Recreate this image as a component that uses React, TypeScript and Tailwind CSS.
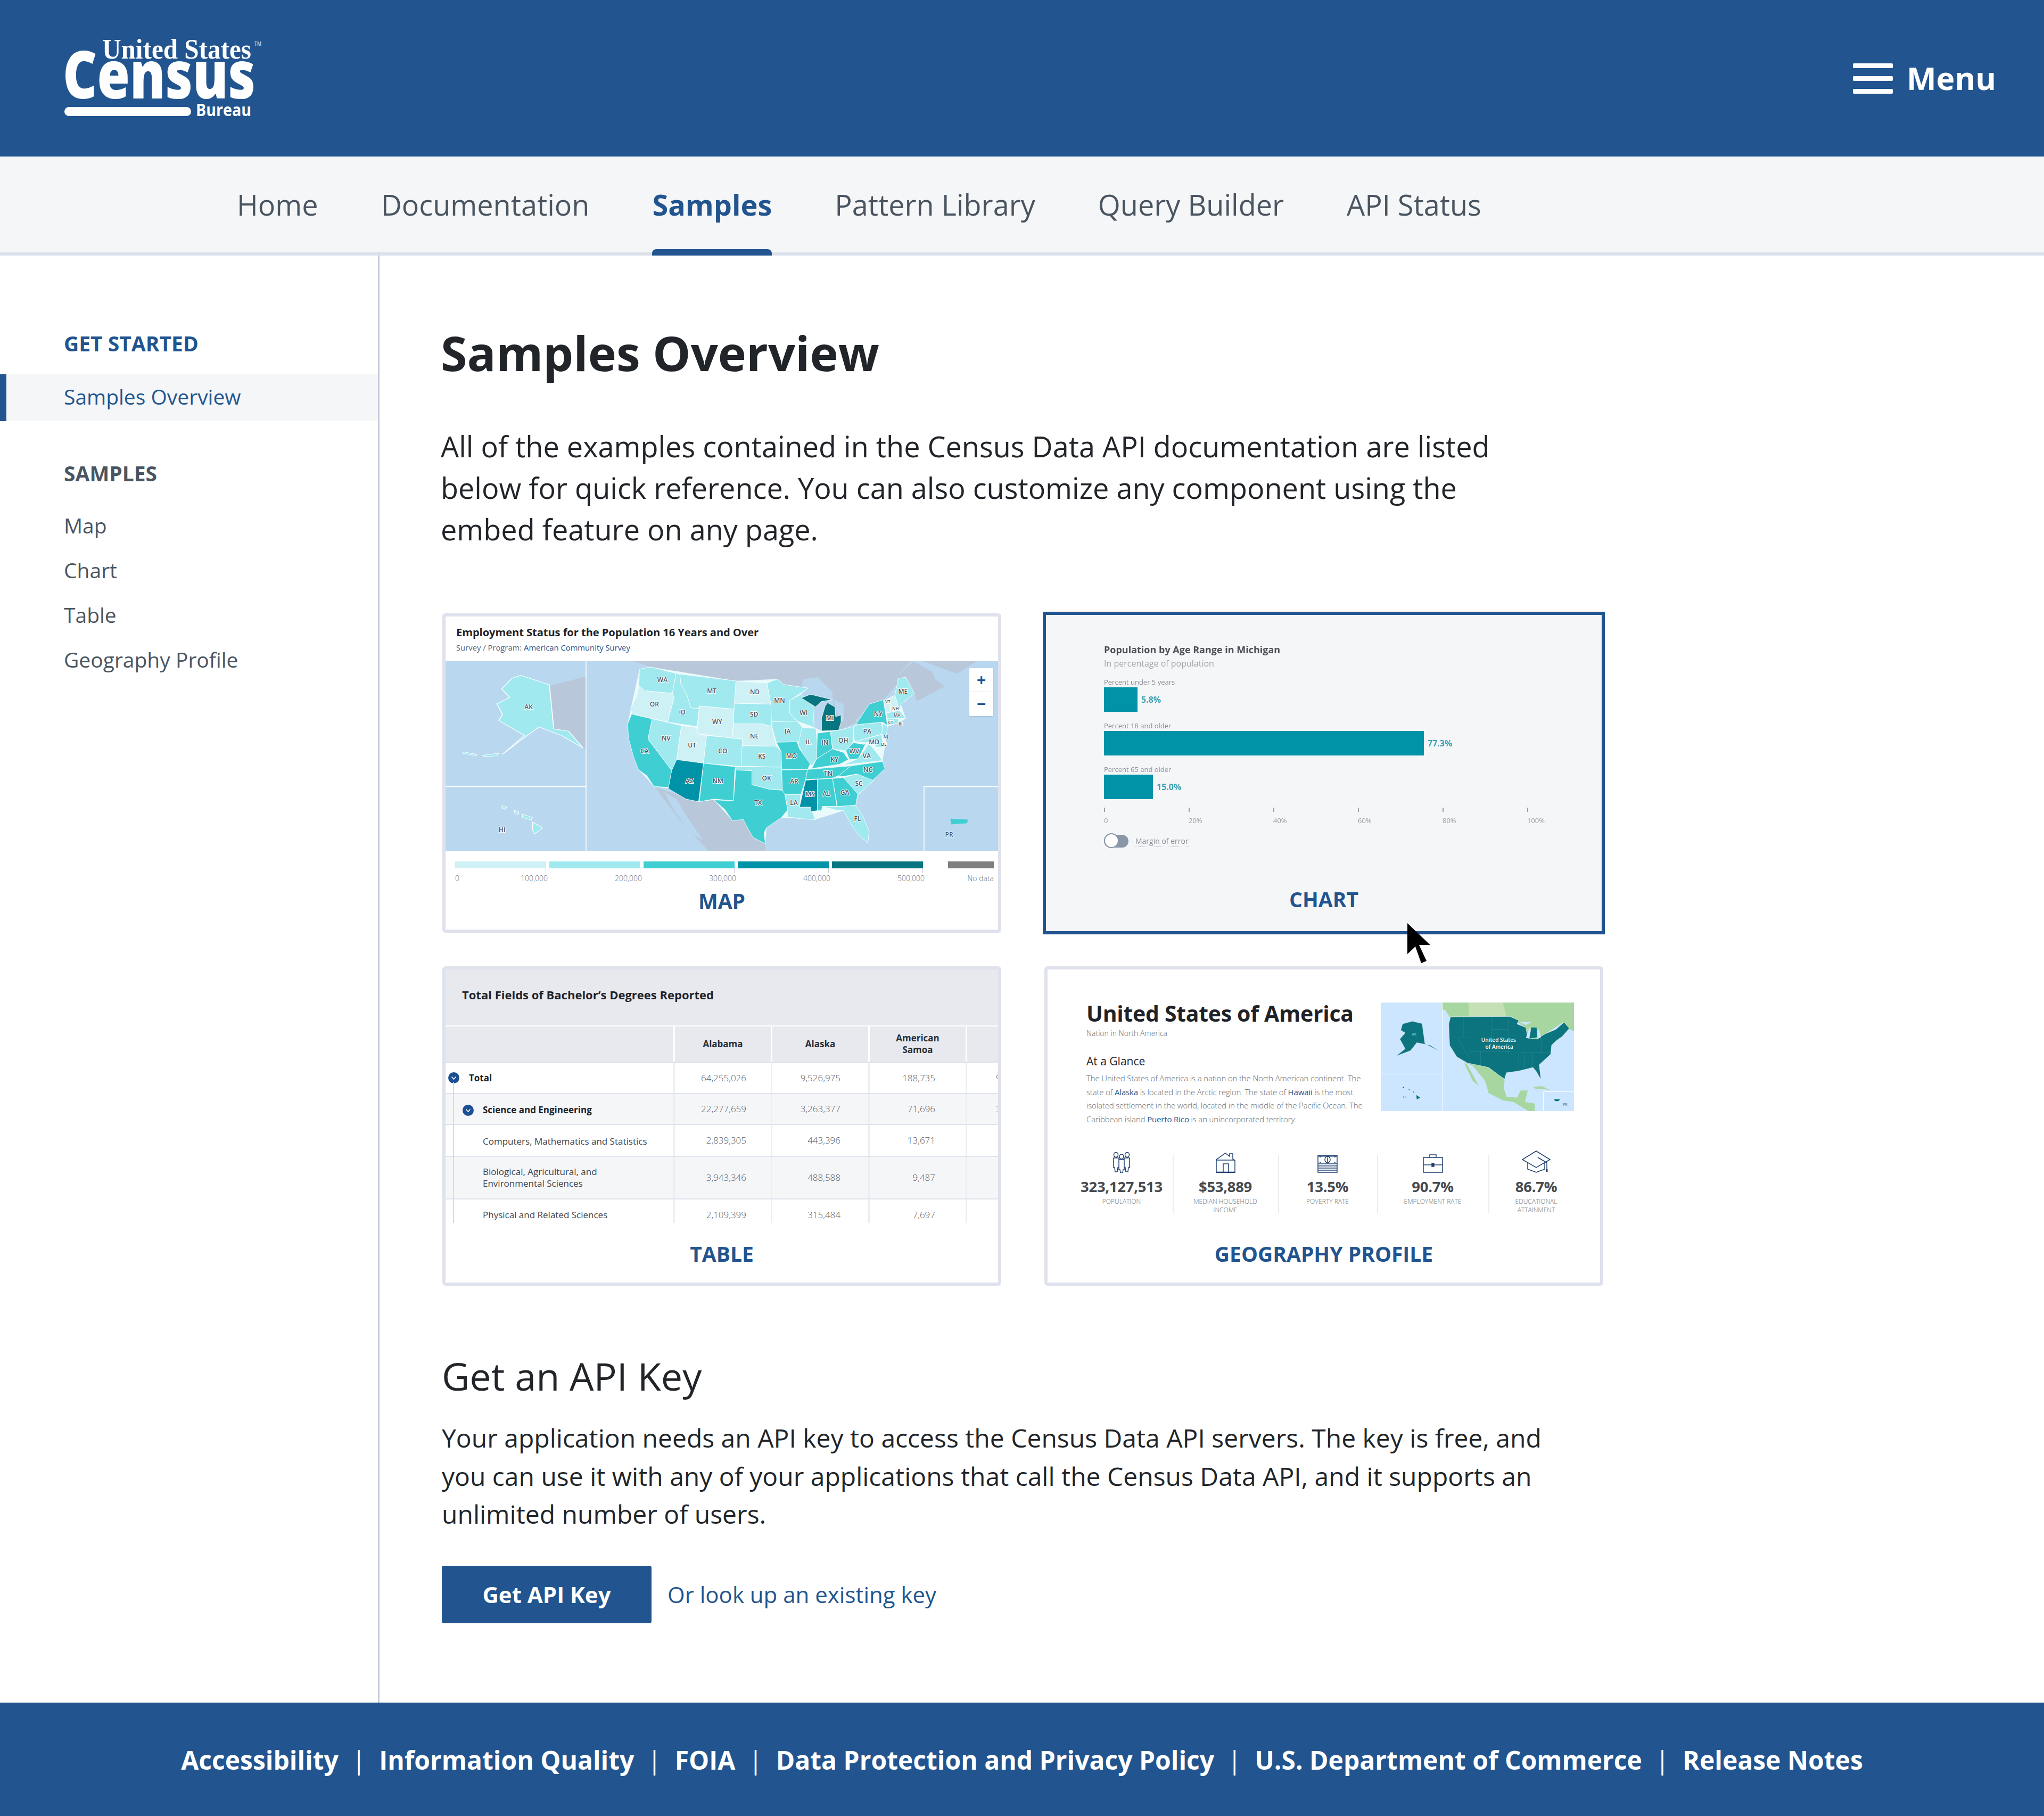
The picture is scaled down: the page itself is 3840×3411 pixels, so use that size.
import React from "react";

const C1 = "#cef1f5", C2 = "#9fe9ef", C3 = "#3fcfd2", C4 = "#0093a8", C5 = "#087680";
const STATES: [string, string][] = [
  [C2, "90,45 135,32 240,68 225,180 110,165 88,135"],
  [C1, "88,135 110,165 225,180 232,205 205,340 58,295 55,262 80,190"],
  [C3, "58,295 142,322 125,435 222,610 210,705 150,700 120,640 85,605 65,530 45,430 42,350"],
  [C2, "142,322 262,360 242,550 222,610 125,435"],
  [C2, "240,68 255,72 260,130 285,190 300,260 335,265 325,365 205,340 232,205 225,180"],
  [C2, "255,72 485,110 478,268 335,250 330,265 300,260 285,190 260,130"],
  [C1, "335,250 478,268 470,430 325,405"],
  [C1, "262,360 325,370 325,405 365,415 352,570 242,550"],
  [C2, "365,415 512,435 508,588 352,570"],
  [C4, "242,550 352,570 332,785 280,770 208,712 222,610"],
  [C3, "352,570 485,590 480,610 475,780 395,770 335,785"],
  [C1, "485,110 612,122 628,240 478,235"],
  [C2, "478,235 628,240 630,340 632,365 590,350 475,350"],
  [C1, "475,350 590,350 632,365 650,475 510,472 512,435 470,430"],
  [C2, "510,472 650,475 670,505 672,592 506,586"],
  [C2, "484,588 672,592 675,720 620,715 550,690 550,612 484,608"],
  [C3, "484,608 550,612 550,690 620,715 682,722 697,830 670,875 610,930 600,960 605,1020 555,985 530,925 515,885 470,890 440,830 395,775 475,780"],
  [C2, "612,122 655,100 680,130 780,150 705,220 705,290 735,335 630,338 628,240"],
  [C2, "630,338 735,335 760,375 750,450 650,453 632,365"],
  [C3, "650,453 735,450 745,490 790,570 778,605 672,605 670,505"],
  [C3, "672,608 778,605 770,660 750,745 685,745 675,720"],
  [C2, "685,745 750,745 745,815 790,815 810,885 750,880 695,870 697,830"],
  [C2, "705,220 750,185 800,250 805,370 735,335 705,290"],
  [C2, "755,372 812,375 820,490 815,545 795,585 760,520 740,465"],
  [C3, "818,402 872,392 880,490 815,545"],
  [C5, "752,205 790,185 880,215 835,225 810,255"],
  [C5, "850,250 860,232 890,255 893,310 915,300 915,340 905,385 835,390 835,320"],
  [C2, "872,392 910,385 965,365 965,450 935,500 880,490"],
  [C3, "815,545 880,490 925,510 945,550 910,575 795,600"],
  [C3, "778,605 955,585 905,640 875,655 770,660"],
  [C4, "770,665 818,660 818,835 790,840 790,815 745,815"],
  [C3, "818,660 880,655 898,810 838,812 835,835 818,835"],
  [C3, "880,655 925,650 985,730 975,805 900,812"],
  [C2, "838,812 900,812 975,805 1005,870 1030,950 1025,1015 990,975 965,930 925,835 890,830"],
  [C2, "925,650 980,630 1050,665 985,745"],
  [C3, "905,640 955,585 1085,560 1095,600 1045,665 980,630 920,645"],
  [C2, "920,580 985,545 1030,460 1060,510 1085,555"],
  [C3, "935,500 965,455 1010,465 1020,450 985,545 950,550"],
  [C2, "965,365 985,355 1080,340 1088,405 970,450"],
  [C3, "975,355 1030,240 1088,215 1105,360 1085,340"],
  [C2, "970,450 1080,410 1090,480 1060,480 1040,450 1015,455"],
  [C2, "1085,345 1105,365 1100,430 1082,410"],
  [C1, "1090,220 1115,212 1118,285 1100,290"],
  [C1, "1115,210 1135,190 1155,275 1118,285"],
  [C2, "1135,190 1150,95 1180,90 1215,180 1160,240 1155,275"],
  [C2, "1100,290 1155,275 1180,320 1105,322"],
  [C2, "1105,322 1150,320 1150,345 1108,360"],
  [C3, "1362,880 1435,885 1430,905 1365,912"],
];
const LABELS: [string, number, number, number?][] = [
  ["WA",184,103],["OR",151,240],["CA",111,502],["NV",199,431],["ID",265,284],["MT",386,165],["WY",408,339],["UT",305,468],["CO",431,502],["AZ",295,667],["NM",411,668],["ND",562,170],["SD",559,295],["NE",560,417],["KS",591,530],["OK",610,653],["TX",575,790],["MN",663,220],["IA",696,391],["MO",712,527],["AR",723,672],["LA",722,790],["WI",762,287],["IL",781,450],["IN",849,453],["MI",869,318],["OH",924,442],["KY",888,549],["TN",862,627],["MS",788,742],["AL",855,738],["GA",930,734],["FL",982,878],["SC",988,683],["NC",1025,605],["VA",1020,527],["WV",969,502],["PA",1022,391],["NY",1067,294],["ME",1168,169],["MD",1050,450],["PR",1357,968],
  ["VT",1106,225,8],["NH",1138,262,8],["MA",1144,298,8],["CT",1118,340,8],["RI",1158,350,8],["NJ",1098,422,8],["DE",1090,464,8],
];

function MapSvg() {
  const label = (t: string, x: number, y: number, s = 12) => (
    <text key={t} x={x} y={y} textAnchor="middle" dominantBaseline="central" fontSize={s} fontWeight={600} fill="#46505c" stroke="#ffffff" strokeWidth={2} paintOrder="stroke">{t}</text>
  );
  return (
    <svg viewBox="0 0 1038 356" className="block w-[1038px] h-[356px]">
      <rect width="1038" height="356" fill="#b9d8f0" />
      <g transform="translate(323,0) scale(0.4591,0.3361)">
        <polygon fill="#b8c8da" points="60,0 1200,0 1140,90 1150,120 1090,215 1030,240 975,355 905,390 880,215 780,150 680,130 655,100 485,110 240,68 135,32" />
        <polygon fill="#b8c8da" points="1210,0 1140,90 1215,180 1225,225 1340,140 1300,100 1290,60" />
        <polygon fill="#b8c8da" points="1250,0 1390,70 1470,0" />
        <polygon fill="#b9d8f0" points="760,100 820,90 880,170 880,215 790,185 750,185" />
        <polygon fill="#b9d8f0" points="885,215 925,240 925,330 915,340 890,255" />
        <polygon fill="#b9d8f0" points="905,385 985,340 980,355 965,365" />
        <polygon fill="#b9d8f0" points="975,330 1030,260 1030,285 985,345" />
        <polygon fill="#b8c8da" points="155,705 330,785 395,775 470,890 515,885 555,985 605,1020 605,1071 380,1071 250,880 200,790" />
        <polygon fill="#b9d8f0" points="190,730 240,770 290,880 350,1000 300,960 230,830" />
        <polygon fill="#eafafb" points="90,45 135,32 485,110 655,100 680,130 780,150 750,185 800,250 805,370 835,390 905,385 965,365 975,355 1030,240 1090,220 1135,190 1150,95 1180,90 1215,180 1160,240 1180,320 1150,345 1105,365 1100,430 1085,555 1095,600 1045,665 985,745 975,805 1030,950 1025,1015 965,930 925,835 810,885 750,880 670,875 610,930 605,1020 555,985 515,885 470,890 395,775 332,785 208,712 150,700 85,605 42,350 55,262" />
        {STATES.map(([f, p], i) => (
          <polygon key={i} fill={f} points={p} stroke="#ffffff" strokeWidth={i < 47 ? 2 : 0} strokeLinejoin="round" />
        ))}
      </g>
      <g transform="translate(-17,-102) scale(0.6887,0.3954)">
        <polygon fill="#b8c8da" points="308,375 409,330 409,680 400,670 360,590 320,580" />
        <polygon fill={C2} stroke="#fff" strokeWidth={2.5} strokeLinejoin="round" points="230,325 308,370 320,580 360,590 400,670 340,610 280,570 240,620 180,700 240,610 170,540 180,510 165,460 200,430 178,390 205,340" />
        <polygon fill={C2} stroke="#fff" strokeWidth={2} points="125,705 170,695 165,708 130,710" />
        <polygon fill={C2} stroke="#fff" strokeWidth={2} points="72,688 110,700 108,706 72,696" />
        <polygon fill={C2} stroke="#fff" strokeWidth={2} points="262,1022 290,1050 268,1078 262,1060" />
        <polygon fill={C2} stroke="#fff" strokeWidth={2} points="235,985 262,1000 258,1012 235,1000" />
        <polygon fill={C2} stroke="#fff" strokeWidth={2} points="213,966 225,975 222,985 213,978" />
        <polygon fill={C2} stroke="#fff" strokeWidth={2} points="180,945 192,950 186,962 178,955" />
      </g>
      <path d="M264 0V356M0 235.5H264M1038 235.5H899V356" fill="none" stroke="#ffffff" strokeWidth={1.5} />
      {LABELS.map(([t, x, y, s]) => label(t, 323 + x / 2.178, y / 2.975, s ?? 12))}
      {label("AK", 156, 85)}
      {label("HI", 106, 316)}
    </svg>
  );
}

const LEG: [string, string][] = [[C1, "100,000"], [C2, "200,000"], [C3, "300,000"], [C4, "400,000"], [C5, "500,000"]];

function MapPreview() {
  return (
    <div className="flex flex-col h-full">
      <div className="h-[84px] shrink-0 pl-[20px] pt-[16px]">
        <div className="text-[20.2px] leading-[26px] font-bold text-[#1f2328] tracking-[-0.1px]">Employment Status for the Population 16 Years and Over</div>
        <div className="text-[14.8px] leading-[22px] mt-[5px] text-[#5a6572]">Survey / Program: <span className="text-[#22558f]">American Community Survey</span></div>
      </div>
      <div className="relative h-[356px] shrink-0">
        <MapSvg />
        <div className="absolute left-[984px] top-[13px] w-[45px] h-[90px] bg-white rounded-[2px] shadow flex flex-col items-center text-[#22558f] font-bold">
          <div className="h-[44px] w-full flex items-center justify-center text-[30px] leading-none">+</div>
          <div className="h-px w-[37px] bg-[#dfe2ea]" />
          <div className="h-[44px] w-full flex items-center justify-center text-[30px] leading-none">−</div>
        </div>
      </div>
      <div className="flex pl-[18px] pt-[20px] text-[14px] font-light text-[#6a7480]">
        <div className="flex gap-[6px]">
          {LEG.map(([c, t], i) => (
            <div key={t} className="w-[171px]">
              <div className="h-[13px]" style={{ background: c }} />
              <div className="h-[9px] w-px bg-[#c8ccd2] ml-auto" />
              <div className="flex justify-between leading-[18px] mt-[1px] -mr-[3px]">
                <span>{i === 0 ? "0" : ""}</span>
                <span>{t}</span>
              </div>
            </div>
          ))}
        </div>
        <div className="ml-[47px] w-[86px] text-right">
          <div className="h-[13px] bg-[#7f7f7f]" />
          <div className="leading-[18px] mt-[10px]">No data</div>
        </div>
      </div>
    </div>
  );
}

function Bar({ label, w, value }: { label: string; w: string; value: string }) {
  return (
    <div>
      <div className="text-[13px] leading-[20px] text-[#8a8f96]">{label}</div>
      <div className="flex items-center h-[46px] mb-[16px]">
        <div className={`h-[46px] bg-[#0093a8] ${w}`} />
        <div className="ml-[7px] text-[16px] font-bold text-[#3aa0b0]">{value}</div>
      </div>
    </div>
  );
}

function ChartPreview() {
  const ticks = ["0", "20%", "40%", "60%", "80%", "100%"];
  return (
    <div className="pl-[109px] pt-[52px] blur-[0.6px]">
      <div className="text-[18px] leading-[26px] font-bold text-[#4b4f55]">Population by Age Range in Michigan</div>
      <div className="text-[16px] leading-[22px] mt-[2px] mb-[14px] text-[#a0a5ab]">In percentage of population</div>
      <Bar label="Percent under 5 years" w="w-[63px]" value="5.8%" />
      <Bar label="Percent 18 and older" w="w-[601px]" value="77.3%" />
      <Bar label="Percent 65 and older" w="w-[92px]" value="15.0%" />
      <div className="flex mt-[4px] w-[960px]">
        {ticks.map((t) => (
          <div key={t} className="w-[159px] text-[13px] text-[#9aa0a6]">
            <div className="w-[2px] h-[8px] bg-[#9aa0a6]" />
            <div className="leading-[18px] mt-[7px]">{t}</div>
          </div>
        ))}
      </div>
      <div className="flex items-center mt-[18px] gap-[13px]">
        <div className="relative w-[46px] h-[24px] bg-[#8a97a8] rounded-full">
          <div className="absolute left-0 top-[-3px] w-[28px] h-[28px] rounded-full bg-white border-2 border-[#8a97a8]" />
        </div>
        <div className="text-[14px] text-[#8a8f96] border-b border-dotted border-[#b9bdc2]">Margin of error</div>
      </div>
    </div>
  );
}

const Chevron = () => (
  <svg viewBox="0 0 21 21" className="w-[21px] h-[21px] shrink-0">
    <circle cx="10.5" cy="10.5" r="10.5" fill="#1c4f93" />
    <path d="M6.5 8.5l4 4.5 4-4.5" fill="none" stroke="#fff" strokeWidth="1.6" />
  </svg>
);

const PR = ["pr-[46px]", "pr-[52px]", "pr-[57px]"];
const ROWS: { h: string; bg: string; first: React.ReactNode; vals: string[]; last?: string }[] = [
  { h: "h-[59px]", bg: "bg-white", first: <div className="flex items-center pl-[5px] gap-[18px] font-bold text-[#1f2328]"><Chevron /><span>Total</span></div>, vals: ["64,255,026", "9,526,975", "188,735"], last: "9" },
  { h: "h-[58px]", bg: "bg-[#f5f6f8]", first: <div className="flex items-center pl-[32px] gap-[17px] font-bold text-[#1f2328] pt-[4px]"><Chevron /><span>Science and Engineering</span></div>, vals: ["22,277,659", "3,263,377", "71,696"], last: "3" },
  { h: "h-[60px]", bg: "bg-white", first: <div className="pl-[70px] pt-[4px]">Computers, Mathematics and Statistics</div>, vals: ["2,839,305", "443,396", "13,671"] },
  { h: "h-[80px]", bg: "bg-[#f5f6f8]", first: <div className="pl-[70px] leading-[22px]">Biological, Agricultural, and<br />Environmental Sciences</div>, vals: ["3,943,346", "488,588", "9,487"] },
  { h: "h-[60px]", bg: "bg-white", first: <div className="pl-[70px]">Physical and Related Sciences</div>, vals: ["2,109,399", "315,484", "7,697"] },
];

function TablePreview() {
  const heads: React.ReactNode[] = ["Alabama", "Alaska", <>American<br />Samoa</>, ""];
  return (
    <div className="relative h-[476px] overflow-hidden">
      <div className="h-[107px] bg-[#e7e9ef] pl-[31px] pt-[34px] border-b-[2px] border-white">
        <div className="text-[22px] leading-[26px] font-bold text-[#1f2328]">Total Fields of Bachelor’s Degrees Reported</div>
      </div>
      <div className="flex h-[68px] bg-[#e7e9ef] border-b-[2px] border-[#dbe0ea]">
        <div className="w-[428px] shrink-0" />
        {heads.map((t, i) => (
          <div key={i} className="w-[183px] shrink-0 border-l-[3px] border-white flex items-center justify-center text-center text-[17px] leading-[22px] font-bold text-[#2b2f34]">{t}</div>
        ))}
      </div>
      {ROWS.map((r, i) => (
        <div key={i} className={`flex ${r.h} ${r.bg} border-b-[2px] border-[#dfe3ec] text-[17px] text-[#3d434a]`}>
          <div className="w-[428px] flex items-center shrink-0">{r.first}</div>
          {r.vals.map((v, j) => (
            <div key={j} className={`w-[183px] shrink-0 border-l-[3px] border-[#eceef3] flex items-center justify-end font-light text-[#555b62] ${PR[j]}`}>{v}</div>
          ))}
          <div className="w-[183px] shrink-0 border-l-[3px] border-[#eceef3] flex items-center pl-[54px] font-light text-[#555b62]">{r.last}</div>
        </div>
      ))}
      <div className="absolute left-[14px] top-[212px] bottom-0 w-[2px] bg-[#cfdcee]" />
    </div>
  );
}

function GeoMap() {
  return (
    <svg viewBox="12 9 1089 612" className="block w-[363px] h-[204px] shrink-0">
      <rect x="12" y="9" width="1089" height="612" fill="#cce6ff" />
      <polygon fill="#a7d6a0" points="360,9 1101,9 1101,170 1075,160 1040,120 940,185 890,215 830,210 830,150 790,125 740,85 400,90 375,50 360,50" />
      <polygon fill="#c4e0b4" points="505,9 700,9 720,85 510,85" />
      <polygon fill="#a7d6a0" points="480,345 620,375 700,430 710,445 705,490 720,540 780,545 800,505 840,505 825,570 880,578 880,621 845,621 760,570 700,560 620,520 600,450 530,365" />
      <polygon fill="#cce6ff" points="495,352 530,365 565,470" />
      <polygon fill="#a7d6a0" points="482,350 500,360 565,480 530,450" />
      <polygon fill="#a7d6a0" points="870,485 920,480 970,505 930,495 885,495" />
      <polygon fill="#0c747e" stroke="#e8f4f2" strokeWidth="2" points="405,90 740,88 790,110 780,130 830,150 840,210 890,215 940,185 1000,160 1045,120 1075,155 1035,200 1000,225 975,250 970,300 905,360 915,445 890,400 870,375 790,395 720,405 710,440 680,420 620,375 500,350 440,315 400,250 395,130" />
      <polygon fill="#cce6ff" points="790,118 860,120 830,135" />
      <polygon fill="#cce6ff" points="830,210 850,150 860,170 845,210" />
      <polygon fill="#0c747e" points="860,150 890,150 895,205 850,212" />
      <polygon fill="#cce6ff" points="895,215 915,205 905,170 895,155" />
      <path d="M480 90V205M635 90V230M395 208H515M515 205V350M445 210L510 320M575 285V360M515 285H745M635 160H730M730 90V300M790 290V395M820 300V380M865 290V375M915 210L920 290M800 290H965" fill="none" stroke="#3b9299" strokeWidth="1.5" />
      <polygon fill="#0c747e" stroke="#e8f4f2" strokeWidth="1" points="135,130 190,115 245,128 260,240 345,285 290,250 215,235 180,280 100,310 150,270 120,215 150,180 125,165" />
      <path d="M358 9V621M12 412H358M1101 512H928V621" fill="none" stroke="#ffffff" strokeWidth="3" />
      <polygon fill="#0c747e" points="212,530 235,545 215,555" />
      <circle cx="140" cy="488" r="4" fill="#0c747e" />
      <circle cx="172" cy="500" r="3" fill="#0c747e" />
      <circle cx="197" cy="514" r="3" fill="#0c747e" />
      <polygon fill="#0c747e" points="990,553 1022,555 1015,565 993,565" />
      <text x="200" y="194" textAnchor="middle" fontSize="20" fill="#a9cfd2">AK</text>
      <text x="147" y="550" textAnchor="middle" fontSize="20" fill="#5c6670">HI</text>
      <text x="1052" y="590" textAnchor="middle" fontSize="20" fill="#5c6670">PR</text>
      <text x="676" y="230" textAnchor="middle" fontSize="30" fontWeight="600" fill="#ffffff">United States</text>
      <text x="680" y="270" textAnchor="middle" fontSize="30" fontWeight="600" fill="#ffffff">of America</text>
    </svg>
  );
}

const IC = { fill: "none", stroke: "#1f3f6e", strokeWidth: 1.5 } as const;
const ICONS: React.ReactNode[] = [
  <svg viewBox="0 0 32 39" className="w-[32px] h-[39px]" {...IC}>
    <ellipse cx="5.5" cy="5" rx="4" ry="4.5" /><ellipse cx="26.5" cy="5" rx="4" ry="4.5" /><ellipse cx="16" cy="8.5" rx="4" ry="4.5" />
    <path d="M1 11h10v18H9l-1 8H4l-1-8H1zM21 11h10v18h-2l-1 8h-4l-1-8h-2zM11 14h10v19h-2l-1 6h-4l-1-6h-2z" fill="#fff" />
  </svg>,
  <svg viewBox="0 0 37 38" className="w-[37px] h-[38px]" {...IC}>
    <path d="M1 37V13L18 1l8 6V2h6v10l4 3v22zM1 14h35M14 37V21h10v16" /><path d="M1 37h35" strokeWidth="2.5" />
  </svg>,
  <svg viewBox="0 0 38 34" className="w-[38px] h-[34px]" {...IC}>
    <rect x="1" y="1" width="36" height="32" /><path d="M1 17h36M1 21h36M1 25h36M1 29h36" strokeWidth="1.3" /><ellipse cx="19" cy="9" rx="5" ry="6" /><path d="M19 5v8M4 4h3M31 4h3M4 14h3M31 14h3" /><path d="M1 2.5h36" strokeWidth="2" />
  </svg>,
  <svg viewBox="0 0 38 35" className="w-[38px] h-[35px]" {...IC}>
    <path d="M1 6h36v28H1zM1 20h36M13 6V1h12v5" /><rect x="17" y="17" width="4" height="6" fill="#1f3f6e" />
  </svg>,
  <svg viewBox="0 0 54 42" className="w-[54px] h-[42px]" {...IC}>
    <path d="M27 1l26 16-26 15L1 17zM11 23v12l16 6 16-6V23M30 13l17 10v12" /><path d="M47 35v5" strokeWidth="3" />
  </svg>,
];

const STATS: [string, string, React.ReactNode][] = [
  ["w-[192px]", "323,127,513", "POPULATION"],
  ["w-[198px]", "$53,889", <>MEDIAN HOUSEHOLD<br />INCOME</>],
  ["w-[186px]", "13.5%", "POVERTY RATE"],
  ["w-[209px]", "90.7%", "EMPLOYMENT RATE"],
  ["w-[180px]", "86.7%", <>EDUCATIONAL<br />ATTAINMENT</>],
];

function GeoPreview() {
  return (
    <div className="h-full">
      <div className="flex pl-[73px] pt-[62px]">
        <div className="w-[553px] text-[#626970]">
          <div className="text-[41px] leading-[40px] font-bold text-[#1f2328] tracking-[-0.3px]">United States of America</div>
          <div className="text-[14px] leading-[20px] font-light mt-[8px]">Nation in North America</div>
          <div className="text-[21px] leading-[30px] text-[#1f2328] mt-[27px]">At a Glance</div>
          <div className="text-[15px] leading-[25.6px] font-light mt-[5px] w-[530px] tracking-[-0.15px]">
            The United States of America is a nation on the North American continent. The state of <span className="text-[#22558f] font-normal">Alaska</span> is located in the Arctic region. The state of <span className="text-[#22558f] font-normal">Hawaii</span> is the most isolated settlement in the world, located in the middle of the Pacific Ocean. The Caribbean island <span className="text-[#22558f] font-normal">Puerto Rico</span> is an unincorporated territory.
          </div>
        </div>
        <div><GeoMap /></div>
      </div>
      <div className="flex ml-[43px] mt-[44px]">
        {STATS.map(([w, n, l], i) => (
          <div key={n} className={`relative ${w} flex flex-col items-center text-center`}>
            {i > 0 && <div className="absolute left-0 top-[10px] h-[110px] w-[2px] bg-[#ebedf1]" />}
            <div className="h-[44px] flex items-end justify-center">{ICONS[i]}</div>
            <div className="text-[27.5px] leading-[36px] mt-[8px] font-bold text-[#46494e] tracking-[-0.3px]">{n}</div>
            <div className="text-[12px] leading-[16px] mt-[2px] font-light text-[#6a7076]">{l}</div>
          </div>
        ))}
      </div>
    </div>
  );
}

function Card({ title, children, active }: { title: string; children: React.ReactNode; active?: boolean }) {
  return (
    <div className={`flex flex-col border-[6px] overflow-hidden ${active ? "h-[606px] border-[#22558f] bg-[#f5f6f8] -m-[3px]" : "h-[600px] rounded-[6px] border-[#dfe2ec] bg-white"}`}>
      <div className="h-[498px] shrink-0">{children}</div>
      <div className="h-[72px] flex items-center justify-center text-[39px] font-bold text-[#22558f]">{title}</div>
    </div>
  );
}

const NAV = ["Home", "Documentation", "Samples", "Pattern Library", "Query Builder", "API Status"];
const FOOT = ["Accessibility", "Information Quality", "FOIA", "Data Protection and Privacy Policy", "U.S. Department of Commerce", "Release Notes"];

export default function App() {
  return (
    <div className="w-[3840px] min-h-[3411px] flex flex-col bg-white font-['Open_Sans',sans-serif] text-[#212529]">
      <header className="h-[294px] bg-[#22558f] flex items-center justify-between pl-[118px] pr-[90px] shrink-0">
        <svg viewBox="0 0 380 150" className="w-[380px] h-[150px]" fill="#ffffff">
          <text x="74" y="38" fontFamily="'Liberation Serif',serif" fontSize="52" fontWeight="700" textLength="280" lengthAdjust="spacingAndGlyphs">United States</text>
          <text x="360" y="14" fontFamily="'Open Sans',sans-serif" fontSize="11" textLength="13" lengthAdjust="spacingAndGlyphs">TM</text>
          <text x="0" y="113" fontFamily="'Open Sans',sans-serif" fontSize="124" fontWeight="800" textLength="362" lengthAdjust="spacingAndGlyphs">Census</text>
          <rect x="3" y="129" width="238" height="17" rx="8.5" />
          <text x="250" y="146" fontFamily="'Open Sans',sans-serif" fontSize="32" fontWeight="700" textLength="104" lengthAdjust="spacingAndGlyphs">Bureau</text>
        </svg>
        <div className="flex items-center gap-[26px] text-white">
          <div className="flex flex-col gap-[15px] w-[75px]">
            <div className="h-[9px] bg-white rounded-[2px]" />
            <div className="h-[9px] bg-white rounded-[2px]" />
            <div className="h-[9px] bg-white rounded-[2px]" />
          </div>
          <div className="text-[59px] leading-[70px] font-bold -mt-[2px]">Menu</div>
        </div>
      </header>
      <nav className="h-[186px] bg-[#f5f6f8] border-b-[6px] border-[#dbe0ea] flex items-stretch pl-[445px] gap-[118px] shrink-0 text-[54px] text-[#4a5560]">
        {NAV.map((n) => (
          <div key={n} className={`relative flex items-center ${n === "Samples" ? "font-bold text-[#22558f]" : ""}`}>
            {n}
            {n === "Samples" && <div className="absolute left-0 right-0 bottom-[-6px] h-[12px] bg-[#22558f] rounded-t-[8px]" />}
          </div>
        ))}
      </nav>
      <div className="flex flex-1">
        <aside className="w-[713px] shrink-0 border-r-[3px] border-[#c3cbdb] pt-[141px] text-[39px] text-[#4a5560]">
          <div className="pl-[120px] text-[39px] leading-[48px] font-bold text-[#22558f]">GET STARTED</div>
          <div className="mt-[34px] h-[88px] pb-[4px] bg-[#f5f6f8] border-l-[12px] border-[#22558f] pl-[108px] flex items-center text-[#22558f]">Samples Overview</div>
          <div className="mt-[74px] pl-[120px] text-[39px] leading-[48px] font-bold">SAMPLES</div>
          <div className="mt-[32px] pl-[120px]">
            {["Map", "Chart", "Table", "Geography Profile"].map((t) => (
              <div key={t} className="h-[84px] flex items-center">{t}</div>
            ))}
          </div>
        </aside>
        <main className="pl-[115px] pt-[132px] pb-[149px]">
          <h1 className="text-[90px] leading-[100px] font-bold text-[#212529]">Samples Overview</h1>
          <p className="mt-[87px] text-[54px] leading-[78px] w-[2000px] text-[#212529]">All of the examples contained in the Census Data API documentation are listed below for quick reference. You can also customize any component using the embed feature on any page.</p>
          <div className="relative mt-[119px] ml-[3px] grid grid-cols-[1050px_1050px] gap-x-[81px] gap-y-[63px]">
            <Card title="MAP"><MapPreview /></Card>
            <Card title="CHART" active><ChartPreview /></Card>
            <Card title="TABLE"><TablePreview /></Card>
            <Card title="GEOGRAPHY PROFILE"><GeoPreview /></Card>
            <svg viewBox="0 0 43 75" className="absolute left-[1813px] top-[582px] w-[43px] h-[75px]">
              <path d="M0 0V58L15 44L26 75L36 71L22 41H43Z" fill="#000" />
            </svg>
          </div>
          <div className="ml-[2px]">
            <h2 className="mt-[124px] text-[72px] leading-[90px] text-[#212529]">Get an API Key</h2>
            <p className="mt-[36px] text-[48px] leading-[71.5px] w-[2100px] text-[#212529]">Your application needs an API key to access the Census Data API servers. The key is free, and you can use it with any of your applications that call the Census Data API, and it supports an unlimited number of users.</p>
            <div className="mt-[61px] flex items-center gap-[30px]">
              <div className="w-[394px] h-[108px] bg-[#22558f] rounded-[4px] flex items-center justify-center text-[42px] font-bold text-white">Get API Key</div>
              <div className="text-[42px] text-[#22558f]">Or look up an existing key</div>
            </div>
          </div>
        </main>
      </div>
      <footer className="h-[213px] pt-[2px] shrink-0 bg-[#22558f] flex items-center justify-center gap-[25px] text-[48px] font-bold text-white">
        {FOOT.map((f, i) => (
          <React.Fragment key={f}>
            {i > 0 && <span className="font-normal">|</span>}
            <span>{f}</span>
          </React.Fragment>
        ))}
      </footer>
    </div>
  );
}
